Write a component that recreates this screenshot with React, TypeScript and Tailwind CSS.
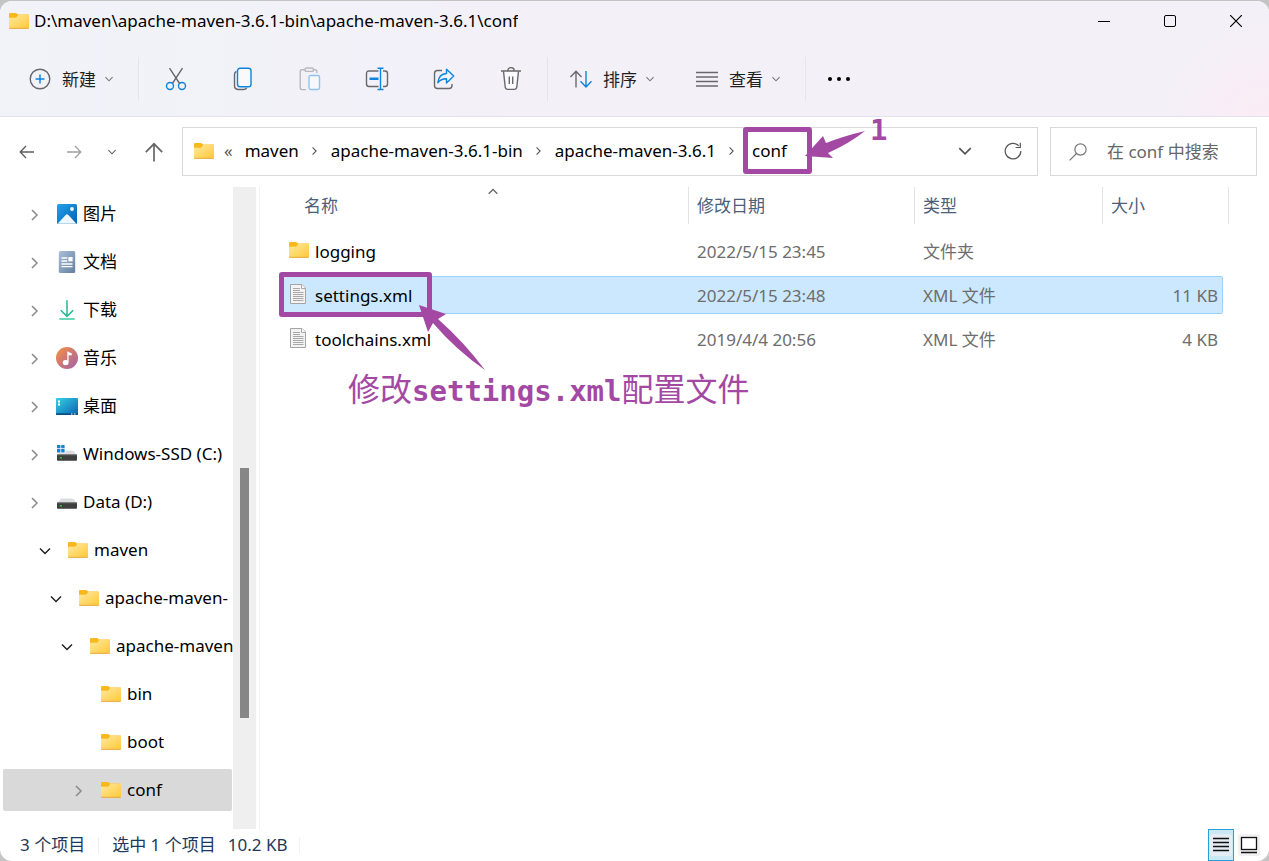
import type { ReactNode } from 'react';

type IconProps = { className?: string };

const FolderIcon = ({ className = 'h-4 w-5' }: IconProps) => (
	<svg viewBox="0 0 20 16" className={`shrink-0 ${className}`} aria-hidden="true">
		<defs>
			<linearGradient id="folder" x1="0" y1="0" x2="1" y2="1">
				<stop offset="0" stopColor="#ffe9a2" />
				<stop offset="1" stopColor="#fec937" />
			</linearGradient>
		</defs>
		<path d="M0 1.2C0 .5.5 0 1.2 0h5.600c.5 0 .8.2 1.100.5L9.200 1.500H19c.6 0 1 .4 1 1v4H0z" fill="#f9b81d" />
		<path d="M0 4.8h6.6c.5 0 .9-.2 1.2-.5L9.400 1.500H19c.6 0 1 .4 1 1V14.500c0 .5-.4.9-1 .9H1c-.6 0-1-.4-1-.9z" fill="url(#folder)" />
		<path d="M.2 15.300h19.600" stroke="#e6a83a" strokeWidth="1" />
	</svg>
);

const FileIcon = () => (
	<svg viewBox="0 0 18 22" className="h-[22px] w-[18px] shrink-0" aria-hidden="true">
		<path d="M1.500 1.500h11.500l3.500 3.500v15.500H1.500z" fill="#f3f3f3" stroke="#a4a4a4" />
		<path d="M12.500 1.500v4h4" fill="#fff" stroke="#a9a9a9" />
		<path d="M4 5.500h7M4 7.500h7M4 9.500h10.500M4 11.500h10.500M4 13.500h10.500M4 15.500h10.500M4 17.500h10.500" stroke="#a8a8a8" />
	</svg>
);

const PictureIcon = () => (
	<svg viewBox="0 0 20 20" className="h-5 w-5 shrink-0" aria-hidden="true">
		<defs>
			<linearGradient id="pic" x1="0" y1="0" x2="1" y2="1">
				<stop offset="0" stopColor="#20a4e8" />
				<stop offset="1" stopColor="#0560b4" />
			</linearGradient>
		</defs>
		<rect width="20" height="20" rx="1.500" fill="url(#pic)" />
		<path d="M1 19.300 8.700 10.900q1.300-1.300 2.600 0L19 19.300q-.3.500-1 .5H2q-.7 0-1-.5z" fill="#eff7fd" />
		<circle cx="15" cy="5" r="1.900" fill="#f2f9fe" />
	</svg>
);

const DocumentIcon = () => (
	<svg viewBox="0 0 20 22" className="h-[22px] w-5 shrink-0" aria-hidden="true">
		<defs>
			<linearGradient id="doc" x1="0" y1="0" x2="1" y2="1">
				<stop offset="0" stopColor="#a9c0d8" />
				<stop offset="1" stopColor="#647f9e" />
			</linearGradient>
		</defs>
		<rect x="1.800" width="16.400" height="22" rx="1.500" fill="url(#doc)" />
		<path d="M4.500 7h5.800M4.500 10h5.800M4.500 13h11M4.500 15.700h11" stroke="#fff" strokeWidth="1.300" />
		<rect x="11.400" y="6" width="4.200" height="4.400" fill="#fff" />
	</svg>
);

const DownloadIcon = () => (
	<svg viewBox="0 0 20 20" className="h-5 w-5 shrink-0" fill="none" strokeWidth="1.500" aria-hidden="true">
		<path d="M10 .3v16M3.800 10.300 10 16.400l6.200-6.100" stroke="#27b795" />
		<path d="M2.300 19h15.400" stroke="#3cc9a0" />
	</svg>
);

const MusicIcon = () => (
	<svg viewBox="0 0 22 22" className="-mx-px h-[22px] w-[22px] shrink-0" aria-hidden="true">
		<defs>
			<linearGradient id="music" x1="0" y1="0" x2="1" y2="1">
				<stop offset=".1" stopColor="#f08c4a" />
				<stop offset="1" stopColor="#a05fae" />
			</linearGradient>
		</defs>
		<circle cx="11" cy="11" r="11" fill="url(#music)" />
		<path d="M11.300 4.200v9.500a2.300 2.300 0 1 0 1.300 2.100V8.300h3.200V6.500z" fill="#fff" />
		<circle cx="9.400" cy="15.600" r="2.600" fill="#fff" />
	</svg>
);

const DesktopIcon = () => (
	<svg viewBox="0 0 22 17" className="-mx-px h-[17px] w-[22px] shrink-0" aria-hidden="true">
		<defs>
			<linearGradient id="desk" x1="0" y1="0" x2="1" y2="1">
				<stop offset="0" stopColor="#34d2e4" />
				<stop offset="1" stopColor="#0b62b4" />
			</linearGradient>
		</defs>
		<rect width="22" height="17" rx="1" fill="url(#desk)" />
		<path d="M0 15.200h22v.8q0 1-1 1H1q-1 0-1-1z" fill="#0a4f86" />
		<path d="M2 2.500h2v2H2zM2 5.500h2v2H2zM15 15.500h1.500v1H15zM18 15.500h1.500v1H18z" fill="#fff" />
	</svg>
);

const DriveIcon = ({ system = false }: { system?: boolean }) => (
	<svg viewBox="0 0 20 18" className="h-[18px] w-5 shrink-0" aria-hidden="true">
		<path d="M4 5.500h12l4 5H0z" fill="#dcdde1" />
		<rect y="9.800" width="20" height="6" rx=".8" fill="#3f3f3f" />
		<path d="M0 9.800h20" stroke="#6b6b6b" />
		<rect x="2.800" y="12" width="2" height="1.600" fill="#39c63f" />
		{system && (
			<>
				<path d="M-.5 0h9v8.200h-9z" fill="#fff" />
				<path d="M0 0h3.400v3.300H0zM4.200 0h3.400v3.300H4.200zM0 4.100h3.400v3.300H0zM4.200 4.100h3.400v3.300H4.200z" fill="#0f86d8" />
			</>
		)}
	</svg>
);

const Chevron = ({ dir, className = '' }: { dir: 'down' | 'right' | 'up' } & IconProps) => {
	const paths = { down: 'M2 4.500l5 5 5-5', right: 'M5 2l5 5-5 5', up: 'M2 9l5-5 5 5' };
	return (
		<svg viewBox="0 0 14 14" fill="none" stroke="currentColor" className={`shrink-0 ${className}`} aria-hidden="true">
			<path d={paths[dir]} strokeWidth="1.500" />
		</svg>
	);
};

const ToolIcon = ({ children }: { children: ReactNode }) => (
	<svg viewBox="0 0 24 24" className="h-6 w-6 shrink-0" fill="none" stroke="#68686c" strokeWidth="1.400" aria-hidden="true">
		{children}
	</svg>
);

const BLUE = '#0f84dc';

const actions = [
	{
		label: '剪切',
		icon: (
			<>
				<path d="M5.500 1.200 15.600 16.500M18.500 1.200 8.400 16.500" />
				<circle cx="6" cy="19" r="3.500" stroke={BLUE} />
				<circle cx="18" cy="19" r="3.500" stroke={BLUE} />
			</>
		),
	},
	{
		label: '复制',
		icon: (
			<>
				<path d="M5.500 4.500q-2 .6-2 3v11q0 4 4 4h5q2.500 0 3.200-1.800" />
				<rect x="6.500" y="1.200" width="13.500" height="18.600" rx="2.600" fill="#f9f9fc" stroke={BLUE} />
			</>
		),
	},
	{
		label: '粘贴',
		icon: (
			<g opacity=".42">
				<path d="M7 2.700H4q-1.800 0-1.800 1.800v16.300q0 1.800 1.800 1.800h4M15.500 2.700h1.800q1.600 0 1.600 1.800v1.500" />
				<rect x="7" y="1" width="8.500" height="3.400" rx="1.500" />
				<rect x="11" y="8.500" width="10.500" height="14" rx="1.700" fill="#fff" stroke={BLUE} />
			</g>
		),
	},
	{
		label: '重命名',
		icon: (
			<>
				<path d="M13.500 4H4Q1.500 4 1.500 6.500v10.500Q1.500 19.500 4 19.500h9.500M18 4h2q2.500 0 2.500 2.500v10.500q0 2.500-2.500 2.500h-2" />
				<path d="M12.500 1.200h6M12.500 22.500h6M15.500 1.200v21.300" stroke={BLUE} />
				<path d="M4.500 11.800h9" stroke={BLUE} strokeWidth="2.600" />
			</>
		),
	},
	{
		label: '共享',
		icon: (
			<>
				<path d="M10 3.500H5.500q-3 0-3 3v12q0 3 3 3h11.500q3 0 3-3v-1.500" />
				<path d="M14.500 2.200v4.300q-7.500.3-8.700 9.200 3.500-4.200 8.700-4v4.400l7.200-7z" fill="#eef6fd" stroke={BLUE} strokeLinejoin="round" />
			</>
		),
	},
	{
		label: '删除',
		icon: (
			<>
				<path d="M4.500 4.200 6.200 20q.3 2.400 2.600 2.400h6.400q2.300 0 2.600-2.400L19.500 4.200" fill="#fbfbfd" />
				<path d="M2 4h20M8.800 3.800a3.200 3.200 0 0 1 6.400 0M10.300 9.500v7.500M13.700 9.500v7.500" />
			</>
		),
	},
];

const ToolbarDivider = () => <span className="h-11 w-px shrink-0 bg-[#e6e4ec]" />;

const MenuButton = ({ label, children }: { label: string; children: ReactNode }) => (
	<button type="button" className="flex shrink-0 items-center text-[#1f1f1f]">
		{children}
		<span className="ml-2.5 pt-0.5 whitespace-nowrap">{label}</span>
		<Chevron dir="down" className="ml-2 h-2.5 w-2.5 text-[#777]" />
	</button>
);

const Header = () => (
	<header className="border-b border-[#e4e1ea] bg-[radial-gradient(circle_at_100%_115%,#fcebf5_0,transparent_110px),linear-gradient(90deg,#f1f3f9,#f3f0f8_40%,#f4f0f8)]">
		<div className="flex h-10 items-center">
			<div className="flex min-w-0 flex-1 items-center gap-[5px] pl-[9px]">
				<FolderIcon />
				<h1 className="truncate text-black">D:\maven\apache-maven-3.6.1-bin\apache-maven-3.6.1\conf</h1>
			</div>
			<button type="button" aria-label="最小化" className="flex h-full w-[66px] items-center justify-center">
				<span className="h-px w-3 bg-black" />
			</button>
			<button type="button" aria-label="最大化" className="flex h-full w-[66px] items-center justify-center">
				<span className="h-3 w-3 rounded-[2px] border border-black" />
			</button>
			<button type="button" aria-label="关闭" className="flex h-full w-[66px] items-center justify-center">
				<svg viewBox="0 0 12 12" className="h-3 w-3" stroke="#000" strokeWidth="1.200" aria-hidden="true">
					<path d="M0 0l12 12M12 0L0 12" />
				</svg>
			</button>
		</div>
		<div className="flex h-[75px] items-center pl-7">
			<MenuButton label="新建">
				<ToolIcon>
					<circle cx="12" cy="12" r="9.800" />
					<path d="M12 7.500v9M7.500 12h9" stroke={BLUE} strokeWidth="1.500" />
				</ToolIcon>
			</MenuButton>
			<div className="flex items-center pl-6">
				<ToolbarDivider />
				<div className="flex px-[3px]">
					{actions.map(({ label, icon }) => (
						<button key={label} type="button" aria-label={label} className="flex w-[67px] justify-center">
							<ToolIcon>{icon}</ToolIcon>
						</button>
					))}
				</div>
				<ToolbarDivider />
			</div>
			<div className="flex items-center gap-10 pr-6 pl-[21px]">
				<MenuButton label="排序">
					<ToolIcon>
						<path d="M7 20.500V4.500M1.500 10 7 4.200l5.500 5.800" />
						<path d="M17 4v16M11.500 14.200 17 20l5.500-5.800" stroke={BLUE} />
					</ToolIcon>
				</MenuButton>
				<MenuButton label="查看">
					<ToolIcon>
						<path d="M1 5.500h22M1 10h22M1 14.500h22M1 19h22" />
					</ToolIcon>
				</MenuButton>
			</div>
			<ToolbarDivider />
			<button type="button" aria-label="更多" className="ml-[22px] flex gap-[5px]">
				<span className="h-1 w-1 rounded-full bg-black" />
				<span className="h-1 w-1 rounded-full bg-black" />
				<span className="h-1 w-1 rounded-full bg-black" />
			</button>
		</div>
	</header>
);

const crumbs = ['maven', 'apache-maven-3.6.1-bin', 'apache-maven-3.6.1'];

const AddressRow = () => (
	<div className="flex items-center gap-3 pt-[10px] pr-3 pb-[11px] pl-[18px]">
		<nav className="flex w-[152px] shrink-0 items-center text-[#5c5c5c]">
			<button type="button" aria-label="后退">
				<svg viewBox="0 0 18 18" className="h-[18px] w-[18px]" fill="none" stroke="currentColor" strokeWidth="1.300">
					<path d="M16 9H2.500M8 3 2.200 9 8 15" />
				</svg>
			</button>
			<button type="button" aria-label="前进" className="ml-[29px] text-[#a0a0a0]">
				<svg viewBox="0 0 18 18" className="h-[18px] w-[18px]" fill="none" stroke="currentColor" strokeWidth="1.300">
					<path d="M2 9h13.500M10 3l5.800 6-5.800 6" />
				</svg>
			</button>
			<button type="button" aria-label="最近位置" className="ml-6">
				<Chevron dir="down" className="h-2.5 w-2.5" />
			</button>
			<button type="button" aria-label="上移" className="ml-[27px]">
				<svg viewBox="0 0 20 20" className="h-5 w-5" fill="none" stroke="#666" strokeWidth="1.700">
					<path d="M10 19.500V2M1.800 10.200 10 1.800l8.200 8.400" />
				</svg>
			</button>
		</nav>
		<div className="flex h-[49px] min-w-0 flex-1 items-center border border-[#d9d9d9] px-[11px] pb-0.5 text-black">
			<FolderIcon />
			<span className="ml-2.5 text-[#555]">«</span>
			{crumbs.map(crumb => (
				<div key={crumb} className="flex shrink-0 items-center">
					<button type="button" className="ml-3 whitespace-nowrap">
						{crumb}
					</button>
					<Chevron dir="right" className="ml-2.5 h-2.5 w-2.5 text-[#555]" />
				</div>
			))}
			<div className="relative ml-4">
				<button type="button">conf</button>
				<span className="pointer-events-none absolute -top-3 -left-[9px] z-10 h-[47px] w-[69px] rounded-[3px] border-[5px] border-[#a349a4]" />
				<svg viewBox="0 0 62 28" className="absolute -top-2 left-[53px] z-20 h-7 w-[62px]" fill="#a349a4" aria-hidden="true">
					<path d="M0 25 18 5l3 7Q39 5 60 0 45 12 23 22l5 5z" />
				</svg>
				<span className="absolute -top-[27px] left-[118px] z-20 font-['DejaVu_Sans_Mono'] text-[29px] leading-9 font-bold text-[#a349a4]">1</span>
			</div>
			<div className="ml-auto flex items-center gap-[31px] pr-[4px] text-[#555]">
				<button type="button" aria-label="以前的位置">
					<Chevron dir="down" className="h-4 w-4" />
				</button>
				<button type="button" aria-label="刷新">
					<svg viewBox="0 0 18 18" className="h-[18px] w-[18px]" fill="none" stroke="currentColor" strokeWidth="1.200">
						<path d="M14.700 3.800A7.800 7.800 0 1 0 16.800 9M16.300.8v4.700h-4.700" />
					</svg>
				</button>
			</div>
		</div>
		<label className="flex h-[49px] w-[207px] shrink-0 items-center gap-5 border border-[#d9d9d9] pl-[18px]">
			<svg viewBox="0 0 18 18" className="h-[18px] w-[18px] shrink-0" fill="none" stroke="#777" strokeWidth="1.200" aria-hidden="true">
				<circle cx="11.500" cy="6.500" r="5.600" />
				<path d="M7.500 10.500.6 17.400" />
			</svg>
			<input
				type="search"
				aria-label="在 conf 中搜索"
				placeholder="在 conf 中搜索"
				className="w-full min-w-0 bg-transparent outline-none placeholder:text-[#666]"
			/>
		</label>
	</div>
);

type Node = { label: string; icon: ReactNode; level: 0 | 1 | 2 | 3 | 4; state?: 'open' | 'closed'; selected?: boolean };

const indent = ['pl-6', 'pl-[35px]', 'pl-[46px]', 'pl-[57px]', 'pl-[68px]'];

const tree: Node[] = [
	{ label: '图片', icon: <PictureIcon />, level: 0, state: 'closed' },
	{ label: '文档', icon: <DocumentIcon />, level: 0, state: 'closed' },
	{ label: '下载', icon: <DownloadIcon />, level: 0, state: 'closed' },
	{ label: '音乐', icon: <MusicIcon />, level: 0, state: 'closed' },
	{ label: '桌面', icon: <DesktopIcon />, level: 0, state: 'closed' },
	{ label: 'Windows-SSD (C:)', icon: <DriveIcon system />, level: 0, state: 'closed' },
	{ label: 'Data (D:)', icon: <DriveIcon />, level: 0, state: 'closed' },
	{ label: 'maven', icon: <FolderIcon />, level: 1, state: 'open' },
	{ label: 'apache-maven-', icon: <FolderIcon />, level: 2, state: 'open' },
	{ label: 'apache-maven', icon: <FolderIcon />, level: 3, state: 'open' },
	{ label: 'bin', icon: <FolderIcon />, level: 4 },
	{ label: 'boot', icon: <FolderIcon />, level: 4 },
	{ label: 'conf', icon: <FolderIcon />, level: 4, state: 'closed', selected: true },
];

const Sidebar = () => (
	<aside className="flex w-[260px] shrink-0 border-r border-[#f3f3f3]">
		<ul className="w-[233px] overflow-hidden pt-[3px] pl-[3px] text-black">
			{tree.map(({ label, icon, level, state, selected }) => (
				<li key={label} className="py-[3px] pr-px">
					<button
						type="button"
						className={`flex h-[42px] w-full items-center rounded-[2px] ${indent[level]} ${selected ? 'bg-[#d9d9d9]' : ''}`}
					>
						<span className="w-[14px] shrink-0 pt-0.5">
							{state === 'open' && <Chevron dir="down" className="h-[14px] w-[14px] text-[#222]" />}
							{state === 'closed' && <Chevron dir="right" className="h-[14px] w-[14px] text-[#8a8a8a]" />}
						</span>
						<span className="ml-4 flex items-center gap-1.5 whitespace-nowrap">
							{icon}
							{label}
						</span>
					</button>
				</li>
			))}
		</ul>
		<div className="flex w-[23px] flex-col items-center bg-[#efefef]">
			<div className="flex-[281]" />
			<div className="w-[9px] flex-[250] bg-[#868686]" />
			<div className="flex-[111]" />
		</div>
	</aside>
);

const files = [
	{ name: 'logging', date: '2022/5/15 23:45', type: '文件夹', size: '', folder: true, selected: false },
	{ name: 'settings.xml', date: '2022/5/15 23:48', type: 'XML 文件', size: '11 KB', folder: false, selected: true },
	{ name: 'toolchains.xml', date: '2019/4/4 20:56', type: 'XML 文件', size: '4 KB', folder: false, selected: false },
];

const SettingsNote = () => (
	<div className="pointer-events-none absolute -top-[5px] -left-px z-10 text-[#a349a4]">
		<div className="h-[45px] w-[153px] rounded-[3px] border-[5px] border-[#a349a4]" />
		<svg viewBox="0 0 68 66" className="absolute top-[33px] left-[139px] h-[66px] w-[68px]" fill="currentColor" aria-hidden="true">
			<path d="M1 0 28 9l-8 5Q46 37 67 65 38 45 15 18l-5 9z" />
		</svg>
		<p className="absolute top-[95px] left-[69px] text-[32px] leading-[44px] whitespace-nowrap">
			修改
			<span className="font-['DejaVu_Sans_Mono'] text-[29px] font-bold">settings.xml</span>
			配置文件
		</p>
	</div>
);

const FileList = () => (
	<main className="min-w-0 flex-1 pr-10 pl-5">
		<table className="w-full table-fixed border-separate border-spacing-0 text-left">
			<colgroup>
				<col />
				<col className="w-[226px]" />
				<col className="w-[188px]" />
				<col className="w-[126px]" />
			</colgroup>
			<thead>
				<tr className="h-[42px] align-top text-[#4c607a]">
					<th className="relative p-0 font-normal">
						<div className="flex h-[37px] items-center border-r border-[#e3e3e3] pl-6">名称</div>
						<Chevron dir="up" className="absolute -top-px left-1/2 ml-0.5 h-3 w-3 text-[#666]" />
					</th>
					<th className="p-0 font-normal">
						<div className="flex h-[37px] items-center border-r border-[#e3e3e3] pl-2">修改日期</div>
					</th>
					<th className="p-0 font-normal">
						<div className="flex h-[37px] items-center border-r border-[#e3e3e3] pl-2">类型</div>
					</th>
					<th className="p-0 font-normal">
						<div className="flex h-[37px] items-center border-r border-[#e3e3e3] pl-2">大小</div>
					</th>
				</tr>
			</thead>
			<tbody>
				{files.map(file => {
					const cell = `flex h-[38px] items-center border-y pt-0.5 ${file.selected ? 'border-[#99d1ff] bg-[#cce8ff]' : 'border-transparent'}`;
					return (
						<tr key={file.name} className="h-11 text-[#6d6d6d]">
							<td className="p-0">
								<div className={`${cell} relative pl-[9px] text-black`}>
									<span className="mr-1.5 flex w-5 pb-1">{file.folder ? <FolderIcon /> : <FileIcon />}</span>
									{file.name}
									{file.selected && <SettingsNote />}
								</div>
							</td>
							<td className="p-0">
								<div className={`${cell} pl-2`}>{file.date}</div>
							</td>
							<td className="p-0">
								<div className={`${cell} pl-2`}>{file.type}</div>
							</td>
							<td className="p-0">
								<div className={`${cell} mr-1.5 justify-end rounded-r-[2px] border-r pr-1`}>{file.size}</div>
							</td>
						</tr>
					);
				})}
			</tbody>
		</table>
	</main>
);

const StatusBar = () => (
	<footer className="flex h-8 items-center pr-[9px] pl-5 text-[#1e395b]">
		<span>3 个项目</span>
		<span className="mx-[13px] h-4 w-px bg-[#ededed]" />
		<span>选中 1 个项目</span>
		<span className="ml-3">10.2 KB</span>
		<span className="ml-3 h-4 w-px bg-[#f1f1f1]" />
		<div className="ml-auto flex h-full items-center gap-1">
			<button type="button" aria-label="详细信息" className="flex h-full w-[26px] items-center justify-center border border-[#26a0da] bg-[#cbe8f6]">
				<svg viewBox="0 0 22 22" className="h-[22px] w-[22px]" aria-hidden="true">
					<rect width="22" height="22" rx="2" fill="#e3edf3" />
					<path d="M3 4.500h16M3 8.500h16M3 12.500h16M3 16.500h16" stroke="#111" strokeWidth="1.500" />
				</svg>
			</button>
			<button type="button" aria-label="大缩略图">
				<svg viewBox="0 0 22 22" className="h-[22px] w-[22px]" aria-hidden="true">
					<rect width="22" height="22" rx="2" fill="#f1f1f1" />
					<rect x="3.500" y="3.500" width="15" height="12" fill="#fff" stroke="#111" strokeWidth="1.300" />
					<path d="M3 18.500h16" stroke="#111" strokeWidth="1.300" />
				</svg>
			</button>
		</div>
	</footer>
);

export default function App() {
	return (
		<div className="min-h-screen bg-[#c4c4c4] pt-px">
			<div className="flex min-h-[calc(100vh-1px)] flex-col overflow-hidden rounded-xl bg-white font-['Noto_Sans','Noto_Sans_CJK_SC',sans-serif] text-[17px] leading-6">
				<Header />
				<AddressRow />
				<div className="flex flex-1">
					<Sidebar />
					<FileList />
				</div>
				<StatusBar />
			</div>
		</div>
	);
}
